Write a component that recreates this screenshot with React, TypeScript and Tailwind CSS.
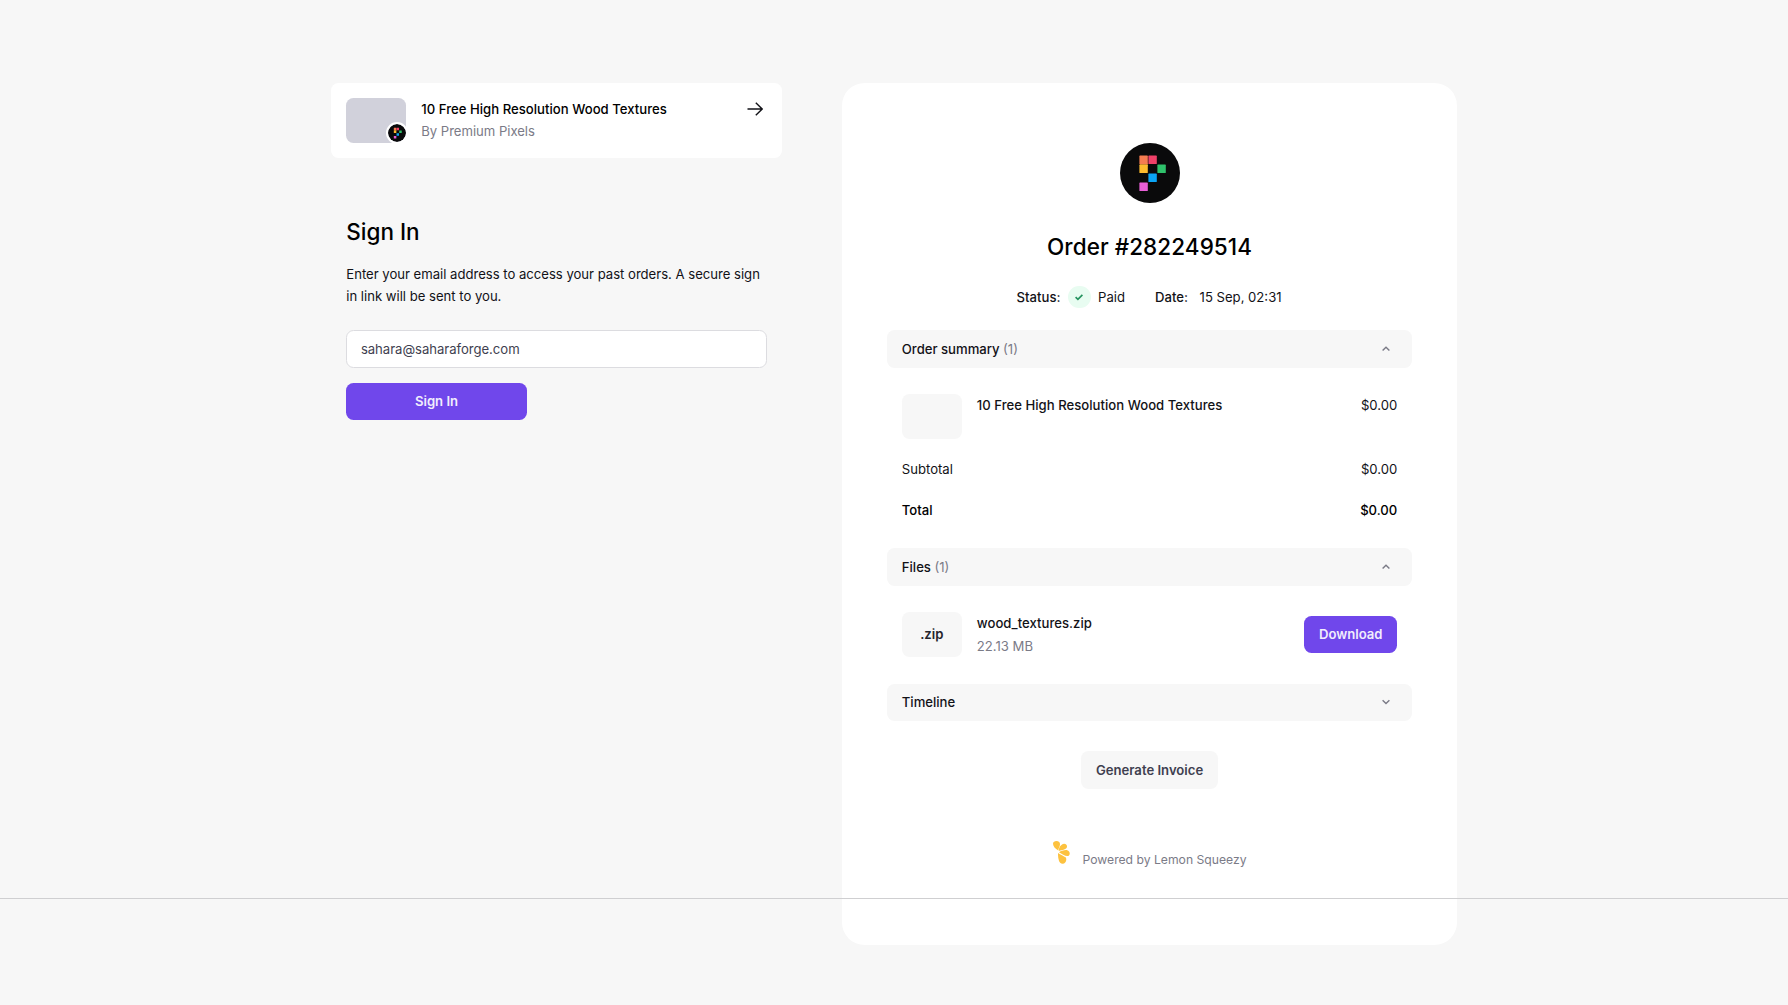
import { ReactNode } from "react";

const PIXELS = [
  { x: 19.4, y: 12.6, fill: "#f57c51" },
  { x: 28.4, y: 12.6, fill: "#ef4068" },
  { x: 19.4, y: 21.6, fill: "#fdbc2e" },
  { x: 37.4, y: 21.6, fill: "#2fc16b" },
  { x: 28.4, y: 30.6, fill: "#0ba5f5" },
  { x: 19.4, y: 39.6, fill: "#e85fd6" },
];

function PixelLogo({ className }: { className: string }) {
  return (
    <svg viewBox="0 0 60 60" className={className} aria-hidden="true">
      <circle cx="30" cy="30" r="30" fill="#0a0a0b" />
      <rect x="19.8" y="20" width="8" height="3" fill="#9b5a2c" />
      {PIXELS.map((p) => (
        <rect key={`${p.x}-${p.y}`} x={p.x} y={p.y} width="8.4" height="8.4" rx="0.6" fill={p.fill} />
      ))}
    </svg>
  );
}

function LemonLogo() {
  return (
    <svg viewBox="0 0 17 23" className="h-[23px] w-[17px]" fill="#fdc23f" aria-hidden="true">
      <path d="M5.3 9.4 C2.2 7.9 0 5 0 2.7 C0 1 1.6 0 3.4 0 C5.8 0 7.2 1.3 7 3.4 C6.8 5.5 5.5 7 5.3 9.4Z" />
      <path d="M5.9 9.9 C5.4 7 7.6 3.4 10.4 2.9 C12.7 2.5 14.4 4.1 14 6.1 C13.5 8.7 9.6 9 5.9 9.9Z" />
      <path d="M6 11.2 C8.4 9.9 12.4 8.5 14.7 9.4 C17 10.4 17.4 13.2 15.7 14.8 C13.2 16 9.2 13.2 6 11.2Z" />
      <path d="M5.1 12 C7.4 13.8 10.6 15 12.9 16.5 C14 19.3 12.6 22.4 10.2 22.8 C7.9 23.1 6.4 21.5 5.9 19.6 C5.2 17 4.8 14.6 5.1 12Z" />
    </svg>
  );
}

function Chevron({ down = false }: { down?: boolean }) {
  return (
    <svg viewBox="0 0 10 10" className="mr-[6.5px] size-2.5" fill="none" stroke="#7b7b87" strokeWidth="1.4" aria-hidden="true">
      <path d={down ? "M1.6 3.2 5 6.6 8.4 3.2" : "M1.6 6.6 5 3.2 8.4 6.6"} />
    </svg>
  );
}

function SectionBar({ title, count, down }: { title: string; count?: string; down?: boolean }) {
  return (
    <div className="flex h-[37.5px] items-center justify-between rounded-[7.5px] bg-[#f7f7f7] px-[15px]">
      <span className="font-medium">
        {title} {count && <span className="font-normal text-[#7b7b87]">{count}</span>}
      </span>
      <Chevron down={down} />
    </div>
  );
}

function Row({ label, value, bold }: { label: string; value: string; bold?: boolean }) {
  return (
    <div className={bold ? "flex justify-between font-medium text-black" : "flex justify-between"}>
      <span>{label}</span>
      <span>{value}</span>
    </div>
  );
}

function Thumb({ children }: { children?: ReactNode }) {
  return (
    <div className="flex h-[45px] w-[60px] items-center justify-center rounded-[7.5px] bg-[#f7f7f7] font-semibold text-[#25252d]">
      {children}
    </div>
  );
}

export default function App() {
  return (
    <div className="relative flex h-[1005px] items-start gap-[59.5px] overflow-hidden bg-[#f7f7f7] pt-[82.8px] pl-[331.3px] font-['Inter',sans-serif] text-[13.125px] leading-[22.5px] text-[#121217]">
      <div className="w-[451px]">
        <div className="flex h-[75px] gap-[15px] rounded-[7.5px] bg-white p-[15px]">
          <div className="relative h-[45px] w-[60px] rounded-[7.5px] bg-[#d1d1db]">
            <PixelLogo className="absolute -right-[1.5px] -bottom-px size-[22px] rounded-full border-2 border-white" />
          </div>
          <div className="flex-1">
            <div className="font-medium tracking-[0.025px] text-black">10 Free High Resolution Wood Textures</div>
            <div className="tracking-[-0.03px] text-[#7b7b87]">By Premium Pixels</div>
          </div>
          <svg viewBox="0 0 16 14" className="mt-1 mr-[4px] h-3.5 w-4" fill="none" stroke="#121217" strokeWidth="1.4" aria-hidden="true">
            <path d="M.5 7H15M8.8.7 15.2 7 8.8 13.3" />
          </svg>
        </div>

        <div className="px-[15px] pt-[59.2px]">
          <h1 className="text-[22.5px] leading-[30px] font-medium text-black">Sign In</h1>
          <p className="mt-[15.7px] tracking-[-0.01px]">
            Enter your email address to access your past orders. A secure sign in link will be sent to you.
          </p>
          <input
            type="email"
            defaultValue="sahara@saharaforge.com"
            className="mt-[22.5px] block h-[37.5px] w-full rounded-[7.5px] border border-[#dcdce0] bg-white px-[13.6px] tracking-[-0.03px] text-[#3f3f50]"
          />
          <button className="mt-[15px] h-[37.5px] w-[180.4px] rounded-[7.5px] bg-[#7047eb] font-semibold text-[#f1edfd]">
            Sign In
          </button>
        </div>
      </div>

      <main className="flex h-[862.5px] w-[615.5px] flex-col rounded-[22.5px] bg-white px-[45px] pt-[60px]">
        <PixelLogo className="size-[60px] self-center" />
        <h2 className="mt-[29.5px] text-center text-[22.5px] leading-[30px] font-medium tracking-[0.06px] text-black">
          Order #282249514
        </h2>
        <div className="mt-[23.5px] flex h-[22.5px] items-center justify-center">
          <span className="font-medium tracking-[0.03px]">Status:</span>
          <span className="mx-[7.5px] flex size-[22.5px] items-center justify-center rounded-full bg-[#e8fcf1]">
            <svg viewBox="0 0 10 10" className="size-2.5" fill="none" stroke="#25935f" strokeWidth="1.7" aria-hidden="true">
              <path d="M1.6 5.2 3.9 7.4 8.4 2.8" />
            </svg>
          </span>
          <span>Paid</span>
          <span className="ml-[30px] font-medium tracking-[0.03px]">Date:</span>
          <span className="mr-px ml-[11.5px]">15 Sep, 02:31</span>
        </div>

        <div className="mt-[22.2px]">
          <SectionBar title="Order summary" count="(1)" />
        </div>
        <div className="mt-[26.4px] flex gap-[15px] px-[15px]">
          <Thumb />
          <span className="flex-1 font-medium tracking-[0.025px]">10 Free High Resolution Wood Textures</span>
          <span>$0.00</span>
        </div>
        <div className="mt-[19px] flex flex-col gap-[18.5px] px-[15px]">
          <Row label="Subtotal" value="$0.00" />
          <Row label="Total" value="$0.00" bold />
        </div>

        <div className="mt-[26.4px]">
          <SectionBar title="Files" count="(1)" />
        </div>
        <div className="mt-[26.4px] flex items-center gap-[15px] px-[15px]">
          <Thumb>.zip</Thumb>
          <div className="flex-1">
            <div className="font-medium tracking-[0.025px]">wood_textures.zip</div>
            <div className="text-[#7b7b87]">22.13 MB</div>
          </div>
          <button className="h-[37.5px] w-[93px] rounded-[7.5px] bg-[#7047eb] font-semibold text-[#f1edfd]">Download</button>
        </div>

        <div className="mt-[26.4px]">
          <SectionBar title="Timeline" down />
        </div>
        <button className="mt-[30px] h-[37.5px] w-[136.5px] self-center rounded-[7.5px] bg-[#f7f7f7] font-semibold text-[#3f3f50]">
          Generate Invoice
        </button>
        <div className="mt-[52px] flex items-start justify-center gap-[13px] text-[12.18px] text-[#7b7b87]">
          <LemonLogo />
          <span className="pt-[8.7px]">Powered by Lemon Squeezy</span>
        </div>
      </main>

      <div className="absolute inset-x-0 top-[898px] h-px bg-[#cfcfd1]" />
    </div>
  );
}
